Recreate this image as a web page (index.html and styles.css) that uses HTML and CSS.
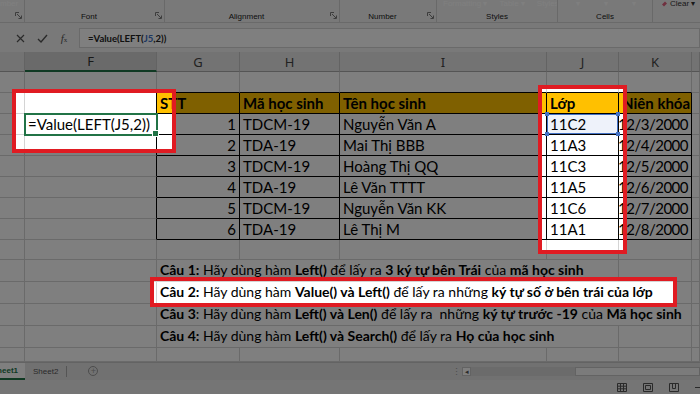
FILE: index.html
```html
<!DOCTYPE html>
<html lang="vi">
<head>
<meta charset="utf-8">
<title>Excel</title>
<link rel="stylesheet" href="styles.css">
</head>
<body>
<div class="app">
  <div class="ribbon">
    <div class="grp g0">
      <div class="gtop"><span class="cut">mber</span></div>
      <div class="glabel"></div>
      <svg class="launch" width="7" height="7" viewBox="0 0 7 7"><path d="M0.5 4V0.5H4M2 2L6 6M3.5 6.5H6.5V3.5" stroke="#7a7a7a" fill="none"/></svg>
    </div>
    <div class="grp g1">
      <div class="gtop"></div>
      <div class="glabel">Font</div>
      <svg class="launch" width="7" height="7" viewBox="0 0 7 7"><path d="M0.5 4V0.5H4M2 2L6 6M3.5 6.5H6.5V3.5" stroke="#7a7a7a" fill="none"/></svg>
    </div>
    <div class="grp g2">
      <div class="gtop"></div>
      <div class="glabel">Alignment</div>
      <svg class="launch" width="7" height="7" viewBox="0 0 7 7"><path d="M0.5 4V0.5H4M2 2L6 6M3.5 6.5H6.5V3.5" stroke="#7a7a7a" fill="none"/></svg>
    </div>
    <div class="grp g3">
      <div class="gtop"></div>
      <div class="glabel">Number</div>
      <svg class="launch" width="7" height="7" viewBox="0 0 7 7"><path d="M0.5 4V0.5H4M2 2L6 6M3.5 6.5H6.5V3.5" stroke="#7a7a7a" fill="none"/></svg>
    </div>
    <div class="grp g4">
      <div class="gtop"><span class="cut">Formatting ▾</span><span class="cut">Table ▾</span><span class="cut">Styles ▾</span></div>
      <div class="glabel">Styles</div>
    </div>
    <div class="grp g5">
      <div class="gtop"><span class="cut">▾</span><span class="cut">▾</span><span class="cut">▾</span></div>
      <div class="glabel">Cells</div>
    </div>
    <div class="grp g6">
      <div class="gtop">
        <svg class="eraser" width="7" height="7" viewBox="0 0 7 7"><path d="M1 4.5L4 1.5L6 3.5L3 6.5Z" fill="#e0607e"/></svg>
        <span class="cut dark">Clear ▾</span>
      </div>
    </div>
  </div>

  <div class="fwrap">
    <div class="fbar">
      <div class="fbtns">
        <span class="fbtn"><svg width="9" height="9" viewBox="0 0 9 9"><path d="M1 1L8 8M8 1L1 8" stroke="#555" stroke-width="1.2"/></svg></span>
        <span class="fbtn"><svg width="11" height="9" viewBox="0 0 11 9"><path d="M1 5L4 8L10 1" stroke="#555" stroke-width="1.4" fill="none"/></svg></span>
        <span class="fbtn fx"><i>f</i><small>x</small></span>
      </div>
      <div class="finput">=Value(LEFT(<span class="blue">J5</span>,2))</div>
    </div>
  </div>

  <div class="sheet">
    <div class="row hdr">
      <div class="c"></div><div class="c sel">F</div><div class="c">G</div><div class="c">H</div><div class="c">I</div><div class="c">J</div><div class="c">K</div><div class="c"></div>
    </div>
    <div class="row">
      <div class="c"></div><div class="c"></div><div class="c tt"></div><div class="c tt"></div><div class="c tt"></div><div class="c tt"></div><div class="c tt"></div><div class="c"></div>
    </div>
    <div class="row">
      <div class="c"></div><div class="c tl"></div><div class="c t gold">STT</div><div class="c t gold">Mã học sinh</div><div class="c t gold">Tên học sinh</div><div class="c t gold">Lớp</div><div class="c t gold">Niên khóa</div><div class="c"></div>
    </div>
    <div class="row">
      <div class="c"></div><div class="c tl edit">=Value(LEFT(J5,2))</div><div class="c t num">1</div><div class="c t">TDCM-19</div><div class="c t">Nguyễn Văn A</div><div class="c t ref">11C2</div><div class="c t num date">12/3/2000</div><div class="c"></div>
    </div>
    <div class="row">
      <div class="c"></div><div class="c tl"></div><div class="c t num">2</div><div class="c t">TDA-19</div><div class="c t">Mai Thị BBB</div><div class="c t">11A3</div><div class="c t num date">12/4/2000</div><div class="c"></div>
    </div>
    <div class="row">
      <div class="c"></div><div class="c tl"></div><div class="c t num">3</div><div class="c t">TDCM-19</div><div class="c t">Hoàng Thị QQ</div><div class="c t">11C3</div><div class="c t num date">12/5/2000</div><div class="c"></div>
    </div>
    <div class="row">
      <div class="c"></div><div class="c tl"></div><div class="c t num">4</div><div class="c t">TDA-19</div><div class="c t">Lê Văn TTTT</div><div class="c t">11A5</div><div class="c t num date">12/6/2000</div><div class="c"></div>
    </div>
    <div class="row">
      <div class="c"></div><div class="c tl"></div><div class="c t num">5</div><div class="c t">TDCM-19</div><div class="c t">Nguyễn Văn KK</div><div class="c t">11C6</div><div class="c t num date">12/7/2000</div><div class="c"></div>
    </div>
    <div class="row">
      <div class="c"></div><div class="c tl"></div><div class="c t num">6</div><div class="c t">TDA-19</div><div class="c t">Lê Thị M</div><div class="c t">11A1</div><div class="c t num date">12/8/2000</div><div class="c"></div>
    </div>
    <div class="row short">
      <div class="c"></div><div class="c"></div><div class="c"></div><div class="c"></div><div class="c"></div><div class="c"></div><div class="c"></div><div class="c"></div>
    </div>
    <div class="row q">
      <div class="c"></div><div class="c"></div><div class="c span4"><b>Câu 1:</b>&nbsp;Hãy dùng hàm&nbsp;<b>Left()</b>&nbsp;để lấy ra&nbsp;<b>3 ký tự bên Trái</b>&nbsp;của&nbsp;<b>mã học sinh</b></div><div class="c"></div><div class="c"></div>
    </div>
    <div class="row q">
      <div class="c"></div><div class="c"></div><div class="c span5"><b>Câu 2:</b>&nbsp;Hãy dùng hàm&nbsp;<b>Value() và Left()</b>&nbsp;để lấy ra những&nbsp;<b>ký tự số ở bên trái của lớp</b></div><div class="c"></div>
    </div>
    <div class="row q">
      <div class="c"></div><div class="c"></div><div class="c span5"><b>Câu 3</b>: Hãy dùng hàm&nbsp;<b>Left() và Len()</b>&nbsp;để lấy ra &nbsp;những&nbsp;<b>ký tự trước -19</b>&nbsp;của&nbsp;<b>Mã học sinh</b></div><div class="c"></div>
    </div>
    <div class="row q">
      <div class="c"></div><div class="c"></div><div class="c span4"><b>Câu 4:</b>&nbsp;Hãy dùng hàm&nbsp;<b>Left() và Search()</b>&nbsp;để lấy ra&nbsp;<b>Họ của học sinh</b></div><div class="c"></div><div class="c"></div>
    </div>
    <div class="row last">
      <div class="c"></div><div class="c"></div><div class="c"></div><div class="c"></div><div class="c"></div><div class="c"></div><div class="c"></div><div class="c"></div>
    </div>
  </div>

  <div class="tabs">
    <div class="tab active"><span>Sheet1</span></div>
    <div class="tab">Sheet2</div>
    <div class="tabsep"></div>
    <div class="plus">+</div>
    <div class="hscroll">
      <span class="grip">⋮</span>
      <span class="sarrow">◂</span>
      <span class="strack"></span>
      <span class="sthumb"></span>
    </div>
  </div>

  <div class="status">
    <svg class="vicon" width="10" height="9" viewBox="0 0 10 9"><path d="M0.5 0.5H9.5V8.5H0.5ZM0.5 3.2H9.5M0.5 5.8H9.5M3.5 0.5V8.5M6.5 0.5V8.5" stroke="#555" fill="none"/></svg>
    <svg class="vicon" width="10" height="9" viewBox="0 0 10 9"><path d="M0.5 0.5H9.5V8.5H0.5ZM2.5 2.5H7.5V6.5H2.5Z" stroke="#555" fill="none"/></svg>
    <svg class="vicon" width="10" height="9" viewBox="0 0 10 9"><path d="M0.5 0.5H9.5V8.5H0.5ZM3.5 0.5V5.5H6.5V0.5" stroke="#555" fill="none"/></svg>
    <span class="zoomdash"></span>
  </div>

  <svg class="dim" width="700" height="394" viewBox="0 0 700 394"><path fill="rgba(0,0,0,0.5)" fill-rule="evenodd" d="M0 0H700V394H0Z M12 89H176V153H12Z M538 85H627V254H538Z M150 277H677V307H150Z"/></svg>
  <div class="hl hl1"></div>
  <div class="hl hl2"></div>
  <div class="hl hl3"></div>
</div>
</body>
</html>
```

FILE: styles.css
```css
* { box-sizing: border-box; margin: 0; padding: 0; }
html, body { width: 700px; height: 394px; overflow: hidden; }
body { background: #f3f3f3; font-family: "Liberation Sans", Arial, sans-serif; color: #262626; }

.app { position: relative; width: 700px; height: 394px; display: flex; flex-direction: column; }

/* ribbon */
.ribbon { height: 23px; flex: none; display: flex; background: #f3f3f3; border-bottom: 1px solid #d5d5d5; }
.grp { position: relative; height: 22px; display: flex; flex-direction: column; border-right: 1px solid #d2d2d2; }
.g0 { width: 25px; }
.g1 { width: 140px; }
.g2 { width: 175px; }
.g3 { width: 97px; }
.g4 { width: 121px; }
.g5 { width: 95px; }
.g6 { flex: 1; border-right: 0; }
.gtop { height: 10px; display: flex; align-items: flex-start; overflow: hidden; font-size: 8px; line-height: 8px; color: #ffffff; }
.cut { white-space: nowrap; }
.cut.dark { color: #333; }
.g4 .gtop { padding-left: 6px; gap: 12px; }
.g5 .gtop { padding-left: 18px; gap: 24px; }
.g6 .gtop { padding-left: 8px; gap: 2px; }
.glabel { flex: 1; display: flex; align-items: center; justify-content: center; padding-right: 11px; font-size: 8px; color: #222; }
.g4 .glabel, .g5 .glabel { padding-right: 0; }
.launch { position: absolute; right: 2px; bottom: 3px; }

/* formula bar */
.fwrap { height: 29px; flex: none; padding: 5px 0 4px; }
.fbar { height: 20px; display: flex; }
.fbtns { width: 80px; display: flex; align-items: center; padding-left: 9px; border-right: 1px solid #d4d4d4; }
.fbtn { width: 22px; display: flex; justify-content: center; align-items: center; color: #555; }
.fx { font-family: "Liberation Serif", serif; font-size: 11px; }
.fx small { font-size: 7px; margin-top: 4px; }
.finput { flex: 1; background: #ffffff; border: 1px solid #d4d4d4; border-left: 0; padding-left: 8px; display: flex; align-items: center; font-family: Lato, sans-serif; font-size: 9.5px; font-weight: 700; color: #222; }
.blue { color: #3a6fc4; }

/* sheet */
.sheet { height: 310px; flex: none; background: #ffffff; }
.row { display: grid; grid-template-columns: 25px 132px 83px 100px 207px 72px 73px 8px; height: 21px; }
.row.short { height: 20px; }
.row.q { height: 22px; }
.row.last { height: 14px; }
.c { min-width: 0; display: flex; align-items: flex-end; padding: 0 3px 1px; border-right: 1px solid #d4d4d4; border-bottom: 1px solid #d4d4d4; white-space: nowrap; overflow: hidden; font-family: Lato, sans-serif; font-size: 15px; line-height: 18px; color: #000; }
.hdr { height: 20px; background: #e6e6e6; }
.hdr .c { justify-content: center; align-items: center; padding: 0; border-right-color: #c6c6c6; border-bottom-color: #ababab; font-family: "Noto Sans", sans-serif; font-size: 13px; line-height: 18px; color: #444; }
.hdr .c.sel { background: #d4d4d4; border-bottom: 2px solid #217346; color: #333; }
.t { border-right-color: #000; border-bottom-color: #000; }
.tl { border-right-color: #000; }
.tt { border-bottom-color: #000; }
.gold { background: #ffc000; font-weight: 700; }
.num { justify-content: flex-end; }
.date { letter-spacing: -0.5px; padding-right: 3px; }
.span4 { grid-column: span 4; }
.span5 { grid-column: span 5; }
.q .c { font-size: 14px; padding-bottom: 2px; }
.edit { position: relative; overflow: visible; outline: 2px solid #217346; outline-offset: -1px; }
.edit::after { content: ""; position: absolute; right: -3px; bottom: -3px; width: 5px; height: 5px; background: #217346; border: 1px solid #fff; }
.ref { position: relative; overflow: visible; background: #eef2fa; box-shadow: inset 0 0 0 1px #4472c4; }
.ref::before { content: ""; position: absolute; left: -2px; top: -2px; width: 4px; height: 4px; background: #4472c4; box-shadow: 71px 0 #4472c4, 0 20px #4472c4, 71px 20px #4472c4; }

/* tabs */
.tabs { height: 18px; flex: none; display: flex; align-items: stretch; background: #e3e3e3; border-top: 1px solid #c6c6c6; font-size: 8px; color: #555; }
.tab { display: flex; align-items: center; padding: 0 8px; white-space: nowrap; }
.tab.active { width: 25px; padding: 0 7px 0 0; justify-content: flex-end; overflow: hidden; background: #fff; color: #217346; font-weight: 700; border-bottom: 2px solid #217346; }
.tabsep { width: 1px; margin: 3px 0; background: #aaa; }
.plus { width: 10px; height: 10px; margin: 3px 0 0 21px; border: 1px solid #999; border-radius: 50%; display: flex; align-items: center; justify-content: center; font-size: 9px; line-height: 8px; color: #999; }
.hscroll { margin-left: auto; width: 250px; display: flex; align-items: center; }
.grip { width: 12px; font-size: 9px; color: #999; text-align: center; }
.sarrow { width: 9px; height: 9px; display: flex; align-items: center; justify-content: center; font-size: 7px; color: #555; background: #fff; border: 1px solid #c6c6c6; }
.strack { width: 104px; height: 9px; background: #d6d6d6; }
.sthumb { flex: 1; height: 9px; background: #f7f7f7; border: 1px solid #c6c6c6; }

/* status */
.status { height: 14px; flex: none; display: flex; align-items: center; justify-content: flex-end; gap: 16px; background: #ebebeb; }
.zoomdash { width: 5px; height: 1px; background: #555; }

/* dim overlay and highlights */
.dim { position: absolute; left: 0; top: 0; pointer-events: none; }
.hl { position: absolute; border: 4px solid #e01b22; }
.hl1 { left: 12px; top: 89px; width: 164px; height: 64px; }
.hl2 { left: 538px; top: 85px; width: 89px; height: 169px; }
.hl3 { left: 150px; top: 277px; width: 527px; height: 30px; }
```
